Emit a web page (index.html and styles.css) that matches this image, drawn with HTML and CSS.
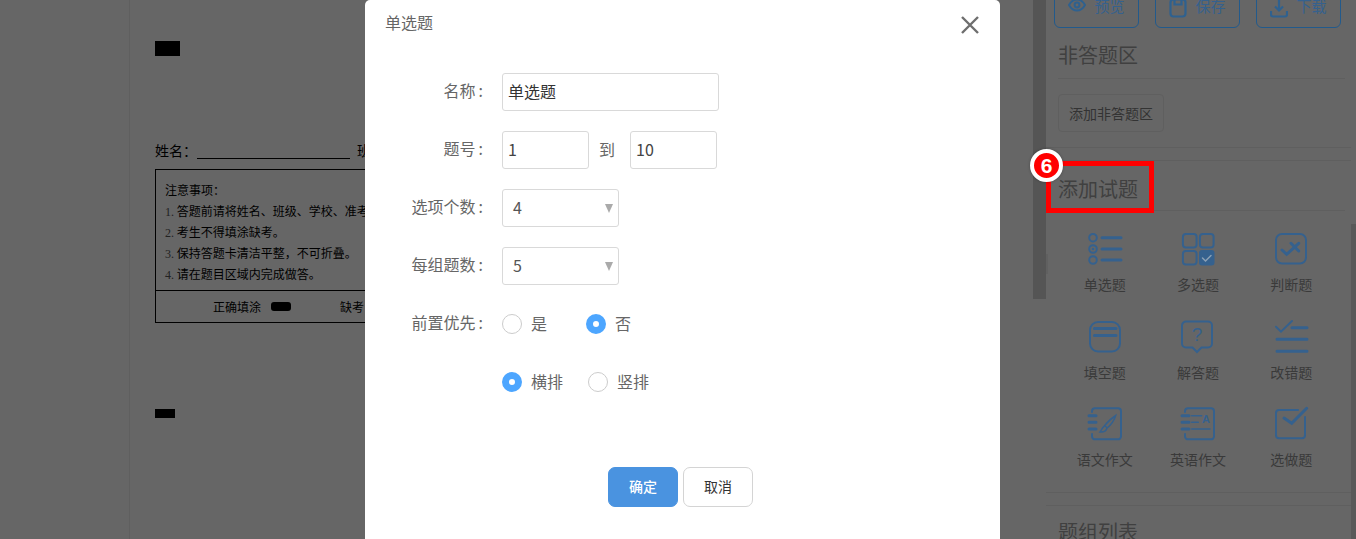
FILE: index.html
```html
<!DOCTYPE html>
<html lang="zh-CN">
<head>
<meta charset="utf-8">
<title>单选题</title>
<link rel="stylesheet" href="styles.css">
</head>
<body>
<div class="page">
  <div class="gutter"></div>
  <main class="doc">
    <div class="mark mark-title"></div>
    <div class="name-row">
      <span>姓名：</span><span class="blank"></span><span>班级：</span><span class="blank"></span>
    </div>
    <section class="notice">
      <div class="notice-body">
        <p>注意事项：</p>
        <p><span class="num">1.</span> 答题前请将姓名、班级、学校、准考证号填写清楚。</p>
        <p><span class="num">2.</span> 考生不得填涂缺考。</p>
        <p><span class="num">3.</span> 保持答题卡清洁平整，不可折叠。</p>
        <p><span class="num">4.</span> 请在题目区域内完成做答。</p>
      </div>
      <div class="notice-foot">
        <span>正确填涂</span><span class="pill"></span><span class="absent">缺考</span>
      </div>
    </section>
    <div class="mark mark-section"></div>
  </main>
  <div class="strip"><span class="strip-handle"></span></div>
  <aside class="panel">
    <div class="panel-inner">
      <div class="top-actions">
        <button class="outline-btn"><svg class="top-icon" viewBox="0 0 18 14"><path d="M1 7c2-3.600 5-5.500 8-5.500s6 1.900 8 5.500c-2 3.600-5 5.500-8 5.500S3 10.600 1 7z"/><circle cx="9" cy="7" r="2.400"/></svg>预览</button>
        <button class="outline-btn"><svg class="top-icon top-icon-tall" viewBox="0 0 18 20"><rect x="1.500" y="1.500" width="15" height="17" rx="3"/><path d="M5.500 1.500v5h7v-5"/></svg>保存</button>
        <button class="outline-btn"><svg class="top-icon top-icon-tall" viewBox="0 0 18 20"><path d="M9 2v10M5 8.500l4 4 4-4M1 13v3.500a2 2 0 0 0 2 2h12a2 2 0 0 0 2-2V13"/></svg>下载</button>
      </div>
      <h2 class="panel-title panel-title-first">非答题区</h2>
      <button class="add-btn">添加非答题区</button>
      <div class="split"></div>
      <h2 class="panel-title">添加试题</h2>
      <div class="type-grid">
        <div class="type"><svg class="type-icon" viewBox="0 0 36 36"><circle cx="6" cy="6.700" r="3.800"/><circle cx="6" cy="18" r="3.800"/><circle class="solid" cx="6" cy="18" r="1.300"/><circle cx="6" cy="29" r="3.800"/><path class="bold" d="M15 6.700h19M15 18h19M15 29h19"/></svg><span>单选题</span></div>
        <div class="type"><svg class="type-icon" viewBox="0 0 36 36"><rect x="2.900" y="2.900" width="13.700" height="13.700" rx="3"/><rect x="19.900" y="2.900" width="13.700" height="13.700" rx="3"/><rect x="2.900" y="19.900" width="13.700" height="13.700" rx="3"/><rect class="solid" x="19" y="19" width="15.500" height="15.500" rx="3"/><path class="tick" d="M22.500 27l3 3 5.500-5.500"/></svg><span>多选题</span></div>
        <div class="type"><svg class="type-icon" viewBox="0 0 36 36"><rect x="3" y="3" width="30" height="29.500" rx="6"/><path class="bold" d="M9 19l4.700 4.300L25.700 12.300M18 12.300L25.700 20"/></svg><span>判断题</span></div>
        <div class="type"><svg class="type-icon" viewBox="0 0 36 36"><rect x="3" y="3" width="30" height="29.500" rx="8"/><path class="bold" d="M7.400 9.500H29M7.400 16.500H29"/></svg><span>填空题</span></div>
        <div class="type"><svg class="type-icon" viewBox="0 0 36 36"><path d="M6 2.500h22a4 4 0 0 1 4 4v18a4 4 0 0 1-4 4h-6.500L17 33l-4.500-4.500H6a4 4 0 0 1-4-4v-18a4 4 0 0 1 4-4z"/><text class="icon-text icon-q" x="17" y="22">?</text></svg><span>解答题</span></div>
        <div class="type"><svg class="type-icon" viewBox="0 0 36 36"><path class="mid" d="M3 7.700l5 5L19 2"/><path class="bold" d="M19 8.700h15M4 20.300h30M4 32.300h30"/></svg><span>改错题</span></div>
        <div class="type"><svg class="type-icon" viewBox="0 0 36 36"><path d="M5 6V5.300a3 3 0 0 1 3-3h23a3 3 0 0 1 3 3v25a3 3 0 0 1-3 3H8a3 3 0 0 1-3-3V28"/><path class="bold" d="M2 9.700h7M2 16.300h7M2 23h7"/><path class="thin" d="M28.700 9.500c-1.500 5-5 9.500-8.500 12.500l-2.500-2.500c3-3.500 7-7.500 11-10zM17 20.500c-2 1-2.300 3.500-4 5.500 3 .3 6-.5 6.800-3.500"/></svg><span>语文作文</span></div>
        <div class="type"><svg class="type-icon" viewBox="0 0 36 36"><path d="M5 6V5.300a3 3 0 0 1 3-3h23a3 3 0 0 1 3 3v25a3 3 0 0 1-3 3H8a3 3 0 0 1-3-3V28"/><path class="bold" d="M2 9.700h7M2 16.300h7M2 23h7"/><path class="thin" d="M11.700 9.700h10M11.700 16.300h6.600M11.700 23H30"/><text class="icon-text icon-a" x="26" y="16.500">A</text></svg><span>英语作文</span></div>
        <div class="type"><svg class="type-icon" viewBox="0 0 36 36"><path d="M25 4H6a3 3 0 0 0-3 3v22.300a3 3 0 0 0 3 3h23a3 3 0 0 0 3-3V11"/><path class="bold" d="M11 12l7.700 5.300L33.700 2.300"/></svg><span>选做题</span></div>
      </div>
      <div class="split split-second"></div>
      <h2 class="panel-title panel-title-last">题组列表</h2>
    </div>
    <div class="scrollbar"></div>
  </aside>

  <div class="callout"></div>
  <div class="badge">6</div>

  <div class="modal" role="dialog">
    <header class="modal-title">单选题</header>
    <svg class="close" viewBox="0 0 18 18"><path d="M1 1l16 16M17 1L1 17"/></svg>
    <form class="form">
      <div class="row"><label class="label">名称<span class="colon">:</span></label><input class="input input-name" value="单选题"></div>
      <div class="row"><label class="label">题号<span class="colon">:</span></label><input class="input input-num" value="1"><span class="to">到</span><input class="input input-num" value="10"></div>
      <div class="row"><label class="label">选项个数<span class="colon">:</span></label><div class="select">4</div></div>
      <div class="row"><label class="label">每组题数<span class="colon">:</span></label><div class="select">5</div></div>
      <div class="row"><label class="label">前置优先<span class="colon">:</span></label>
        <span class="radio"></span><span class="radio-text radio-text-wide">是</span>
        <span class="radio radio-on"></span><span class="radio-text">否</span>
      </div>
      <div class="row"><span class="label"></span>
        <span class="radio radio-on"></span><span class="radio-text radio-text-narrow">横排</span>
        <span class="radio"></span><span class="radio-text">竖排</span>
      </div>
    </form>
    <footer class="modal-foot">
      <button class="btn btn-primary">确定</button>
      <button class="btn">取消</button>
    </footer>
  </div>
</div>
</body>
</html>
```
FILE: styles.css
```css
* { box-sizing: border-box; }
html, body { margin: 0; padding: 0; height: 100%; overflow: hidden; }
body { font-family: "Noto Sans CJK SC", "Liberation Sans", sans-serif; background: #666; }
p, h2 { margin: 0; }
button { font-family: inherit; }

.page { position: relative; display: flex; width: 1356px; height: 539px; overflow: hidden; background: #666; }

.gutter { flex: 0 0 130px; border-right: 1px solid #5f5f5f; }

.doc { flex: 0 0 903px; padding: 41px 0 0 25px; color: #000; overflow: hidden; }
.mark { background: #000; }
.mark-title { width: 25px; height: 15px; }
.mark-section { width: 20px; height: 9px; margin-top: 86px; }
.name-row { display: flex; align-items: flex-start; height: 20px; margin-top: 84px; font-size: 14px; line-height: 20px; white-space: nowrap; }
.blank { width: 153px; height: 19px; margin: 0 7px 0 0; border-bottom: 1px solid #000; }
.notice { width: 600px; margin-top: 9px; border: 1px solid #000; font-size: 12px; }
.notice-body { padding: 9px 9px 6px; border-bottom: 1px solid #000; }
.notice-body p { height: 21px; line-height: 21px; white-space: nowrap; }
.num { font-family: "Liberation Serif", serif; color: #222; }
.notice-foot { display: flex; align-items: center; height: 31px; padding-left: 57px; line-height: 21px; }
.pill { width: 20px; height: 9px; margin-left: 10px; border-radius: 3px; background: #000; }
.absent { margin-left: 49px; }

.strip { position: relative; flex: 0 0 13px; height: 299px; background: #555; }
.strip-handle { position: absolute; left: 13px; top: 254px; width: 2px; height: 20px; background: #606060; }

.panel { display: flex; flex: 1; min-width: 0; }
.panel-inner { flex: 0 0 305px; }
.scrollbar { flex: 0 0 5px; margin-top: 224px; background: #595959; }

.top-actions { display: flex; gap: 16px; height: 40px; margin: -12px 0 0 8px; }
.outline-btn { display: flex; align-items: center; justify-content: center; gap: 8px; width: 85px; height: 40px; padding: 0 0 6px; border: 1px solid #225a8c; border-radius: 6px; background: transparent; color: #35618e; font-size: 15px; }
.top-icon { width: 18px; height: 14px; fill: none; stroke: #2f618f; stroke-width: 2; }
.top-icon-tall { width: 18px; height: 20px; margin-top: 6px; stroke-width: 2.200; }

.panel-title { margin: 0 6px 0 12px; padding: 14px 0 7px; border-bottom: 1px solid #5f5f5f; color: #404040; font-size: 20px; font-weight: 400; line-height: 28px; }
.panel-title-first { padding-top: 13px; padding-bottom: 9px; }
.panel-title-last { padding-top: 12px; }
.add-btn { display: block; width: 106px; height: 38px; margin: 15px 0 15px 12px; padding: 0; border: 1px solid #5f5f5f; border-radius: 4px; background: transparent; color: #333; font-size: 14px; }

.split { height: 14px; border-top: 1px solid #5f5f5f; border-bottom: 1px solid #5f5f5f; }
.split-second { margin-top: 21px; }

.type-grid { display: grid; grid-template-columns: repeat(3, 1fr); row-gap: 22.500px; width: 280px; margin-left: 12px; padding-top: 20px; }
.type { display: flex; flex-direction: column; align-items: center; gap: 7px; color: #3a3a3a; font-size: 14px; line-height: 20px; height: 65px; }
.type-icon { width: 36px; height: 36px; flex: none; fill: none; stroke: #35618e; stroke-width: 2; stroke-linecap: round; }
.type-icon .bold { stroke-width: 3; }
.type-icon .mid { stroke-width: 2; }
.type-icon .thin { stroke-width: 1.500; }
.type-icon .solid { fill: #35618e; stroke: none; }
.type-icon .tick { stroke: #8ba0b5; stroke-width: 1.500; }
.icon-text { fill: #35618e; stroke: none; font-family: "Liberation Sans", sans-serif; text-anchor: middle; }
.icon-q { font-size: 19px; }
.icon-a { font-size: 11px; font-weight: 700; }

.callout { position: absolute; left: 1046px; top: 161px; width: 108px; height: 52px; border: 5px solid #f00; }
.badge { position: absolute; left: 1030px; top: 149px; display: flex; align-items: center; justify-content: center; width: 33px; height: 33px; border: 4px solid #fff; border-radius: 50%; background: #f00; box-shadow: 0 0 3px rgba(0, 0, 0, .3); color: #fff; font: 700 21px/1 "Liberation Sans", sans-serif; }

.modal { position: absolute; left: 365px; top: 0; width: 635px; height: 560px; border-radius: 5px; background: #fff; }
.modal-title { height: 46px; padding-left: 20px; color: #666; font-size: 16px; line-height: 44px; }
.close { position: absolute; left: 596px; top: 16px; width: 18px; height: 18px; fill: none; stroke: #6e6e6e; stroke-width: 2.400; }
.form { padding-top: 27px; }
.row { display: flex; align-items: center; height: 38px; margin-bottom: 20px; color: #666; font-size: 16px; }
.label { flex: 0 0 118px; margin-right: 19px; padding-bottom: 4px; text-align: right; white-space: nowrap; }
.colon { margin-left: 3px; }
.input { height: 38px; padding: 0 5px 2px; border: 1px solid #d9d9d9; border-radius: 3px; color: #444; font: 16px "Noto Sans CJK SC", "Liberation Sans", sans-serif; outline: none; }
.input-name { width: 217px; color: #333; }
.input-num { width: 87px; }
.to { width: 41px; padding: 0 0 3px 10px; }
.select { position: relative; width: 117px; height: 38px; padding-left: 10px; border: 1px solid #d9d9d9; border-radius: 3px; color: #555; line-height: 34px; }
.select::after { content: ""; position: absolute; right: 5px; top: 14px; border-style: solid; border-width: 9px 4px 0; border-color: #aaa transparent transparent; }
.radio { flex: 0 0 20px; height: 20px; border: 1px solid #ccc; border-radius: 50%; background: #fff; }
.radio-on { border: 7px solid #4da6ff; }
.radio-text { margin-left: 9px; padding-bottom: 2px; }
.radio-text-wide { margin-right: 39px; }
.radio-text-narrow { margin-right: 25px; }
.modal-foot { display: flex; gap: 5px; margin-top: 66px; padding-left: 243px; }
.btn { width: 70px; height: 40px; padding: 0 0 2px; border: 1px solid #d4d4d4; border-radius: 7px; background: #fff; color: #333; font-size: 14px; }
.btn-primary { border-color: #4a93e0; background: #4a93e0; color: #fff; font-weight: 500; }
```
